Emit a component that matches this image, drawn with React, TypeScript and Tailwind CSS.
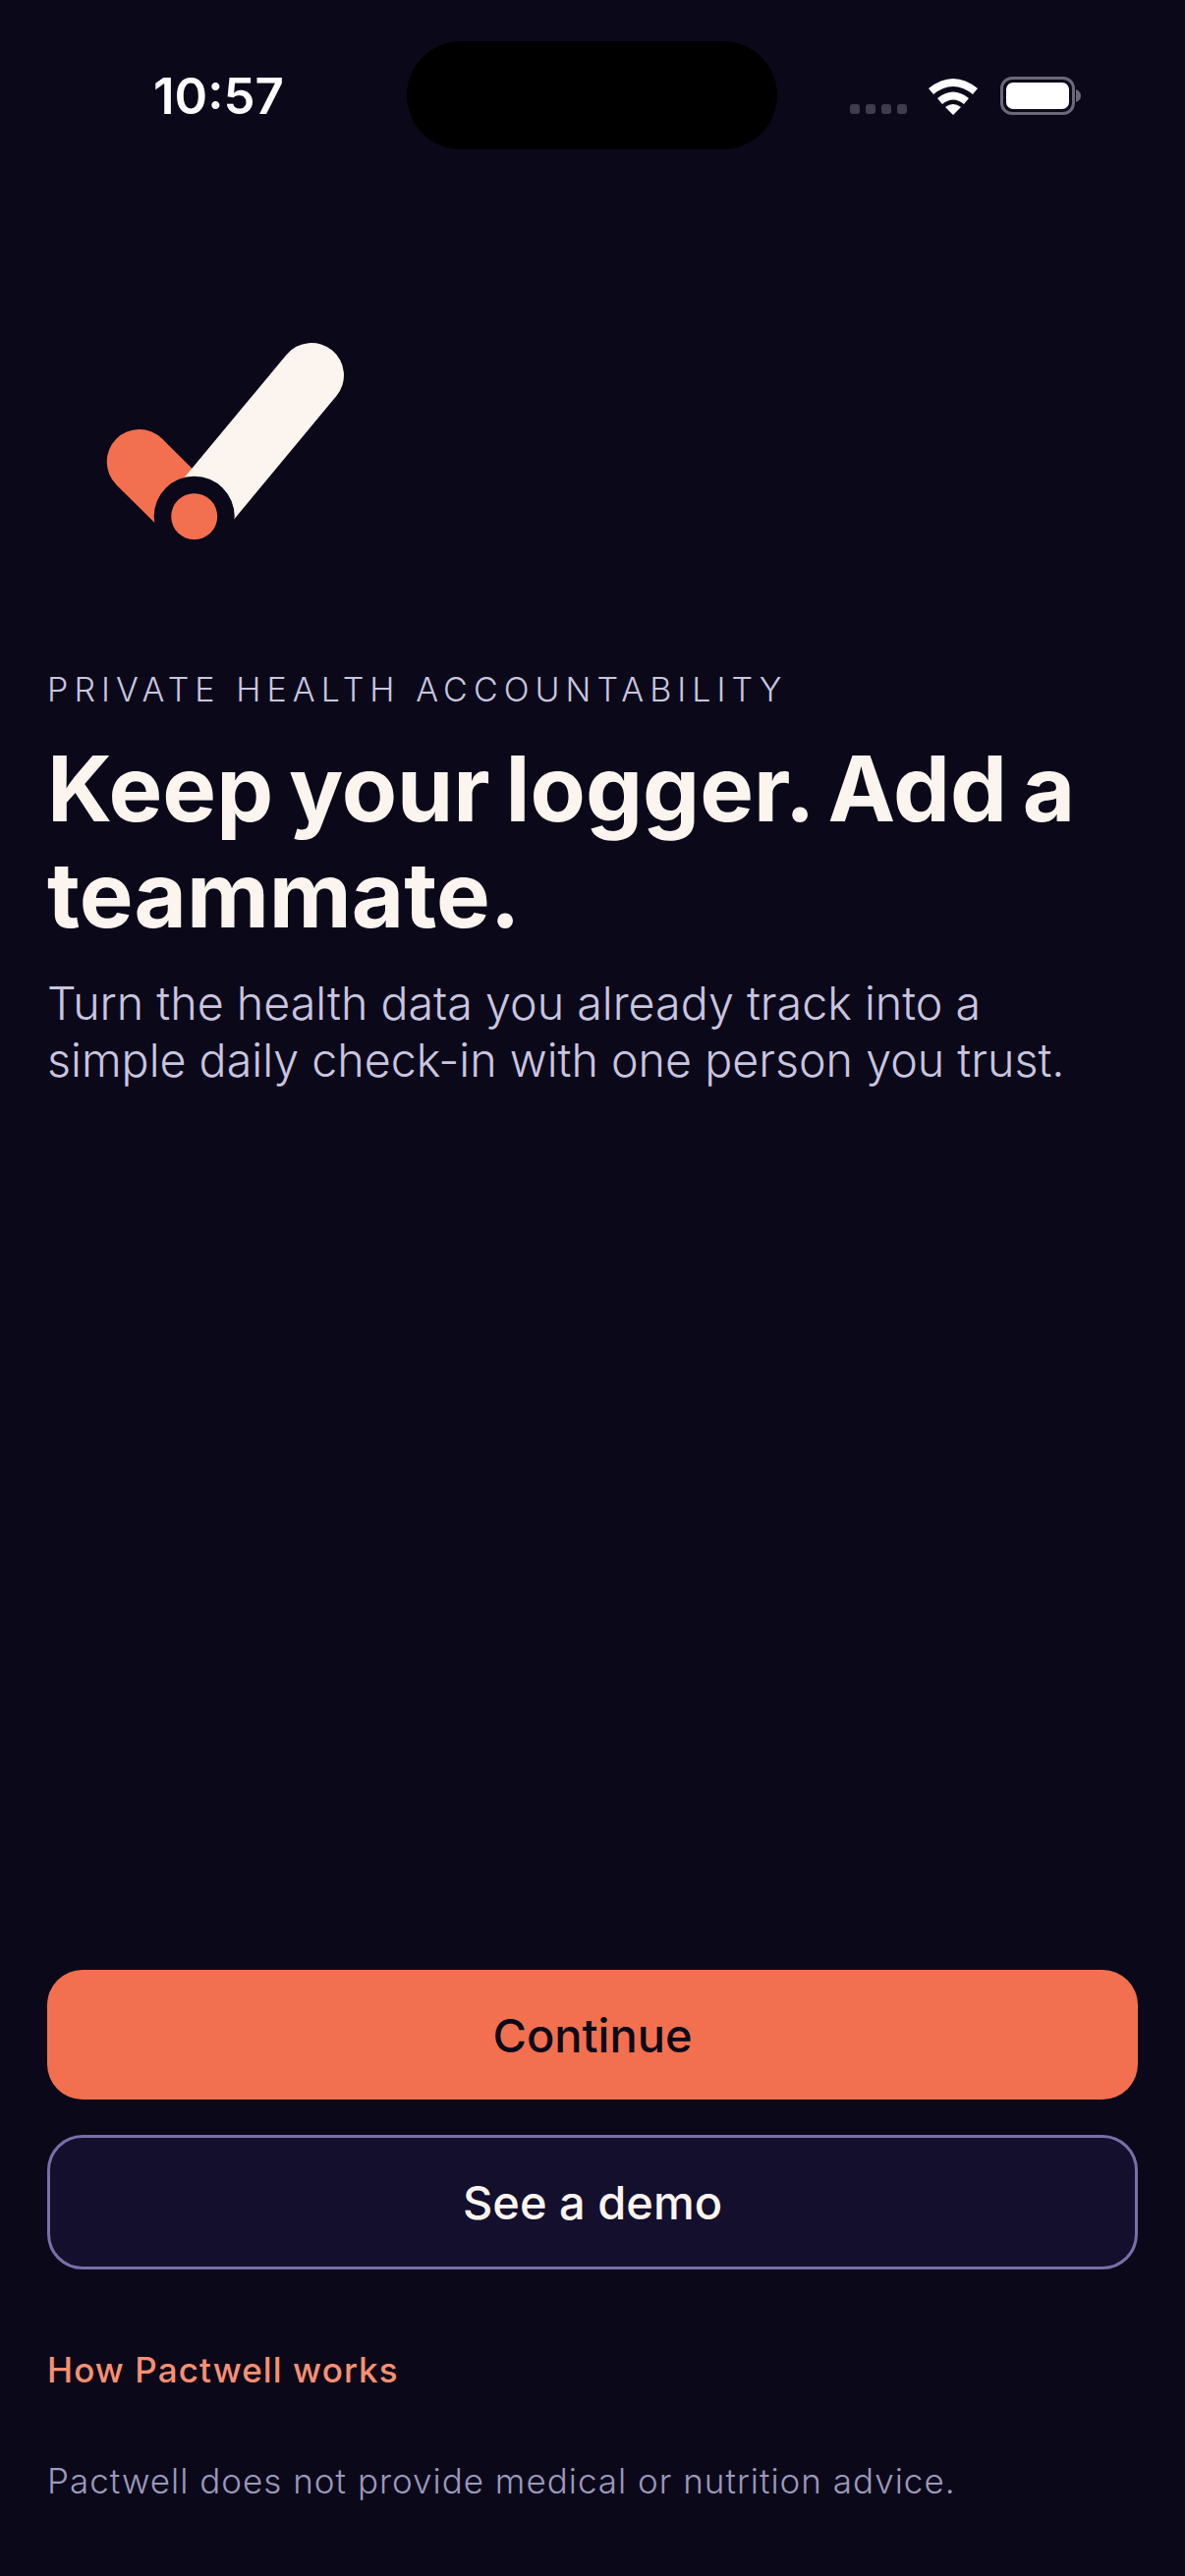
export default function App() {
  return (
    <div className="relative flex h-[2622px] w-[1206px] flex-col overflow-hidden bg-[#0b0919] font-['Inter',sans-serif]">
      <div className="relative h-[153px] shrink-0">
        <span className="absolute left-[156px] top-[69px] text-[51px] leading-[58px] font-semibold text-white">10:57</span>
        <div className="absolute left-[414px] top-[42px] h-[110px] w-[377px] rounded-[55px] bg-black" />
        <div className="absolute left-[865px] top-[106px] flex gap-[6px]">
          <i className="h-[10px] w-[10px] rounded-[3px] bg-[#3f3c4d]" />
          <i className="h-[10px] w-[10px] rounded-[3px] bg-[#3f3c4d]" />
          <i className="h-[10px] w-[10px] rounded-[3px] bg-[#3f3c4d]" />
          <i className="h-[10px] w-[10px] rounded-[3px] bg-[#3f3c4d]" />
        </div>
        <svg className="absolute left-[944px] top-[79px]" width="52" height="38" viewBox="0 0 52 38">
          <path d="M1 11 Q26 -9 51 11 L46 17 Q26 1 6 17 Z" fill="#fff" />
          <path d="M10 21 Q26 8 42 21 L37 27 Q26 18 15 27 Z" fill="#fff" />
          <path d="M18 30 Q26 24 34 30 L26 38 Z" fill="#fff" />
        </svg>
        <div className="absolute left-[1018px] top-[78px] flex h-[39px] w-[76px] items-center rounded-[12px] border-[3px] border-[#6b687c] p-[3px]">
          <div className="h-full w-full rounded-[7px] bg-white" />
        </div>
        <svg className="absolute left-[1095px] top-[91px]" width="5" height="13" viewBox="0 0 5 13">
          <path d="M0 0 Q5 2 5 6.500 Q5 11 0 13 Z" fill="#6b687c" />
        </svg>
      </div>
      <div className="flex flex-1 flex-col px-[48px]">
        <svg className="ml-[52px] mt-[187px] shrink-0" width="260" height="240" viewBox="0 0 260 240">
          <line x1="41.700" y1="130" x2="97.700" y2="185.700" stroke="#f2704f" strokeWidth="66" strokeLinecap="round" />
          <line x1="217" y1="42" x2="97.700" y2="185.700" stroke="#fcf5ef" strokeWidth="66" strokeLinecap="round" />
          <circle cx="97.700" cy="185.700" r="41" fill="#0b0919" />
          <circle cx="97.700" cy="185.700" r="23.500" fill="#f2704f" />
        </svg>
        <p className="mt-[100px] text-[34px] leading-[44px] font-[350] tracking-[6.050px] text-[#c9c5e0]">PRIVATE HEALTH ACCOUNTABILITY</p>
        <h1 className="mt-[25px] text-[92px] leading-[108px] font-bold text-[#fcf5ef] [word-spacing:-6px]">Keep your logger. Add a teammate.</h1>
        <p className="mt-[27px] max-w-[1080px] text-[46.600px] leading-[58px] font-[350] text-[#c9c5e0]">Turn the health data you already track into a simple daily check-in with one person you trust.</p>
        <div className="flex-1" />
        <button className="h-[132px] rounded-[36px] bg-[#f2704f] pt-[2px] text-[47px] font-medium text-[#0a0818]">Continue</button>
        <button className="mt-[36px] h-[137px] rounded-[36px] border-[3px] border-[#7a6fa8] bg-[#130f2c] pt-[2px] text-[47px] font-medium text-[#fcf5ef]">See a demo</button>
        <a className="mt-[80px] text-[35px] leading-[44px] font-medium tracking-[1.100px] text-[#f98f73]">How Pactwell works</a>
        <p className="mt-[69px] mb-[75px] text-[35px] leading-[44px] font-[350] tracking-[1px] text-[#9d98bd]">Pactwell does not provide medical or nutrition advice.</p>
      </div>
    </div>
  );
}
